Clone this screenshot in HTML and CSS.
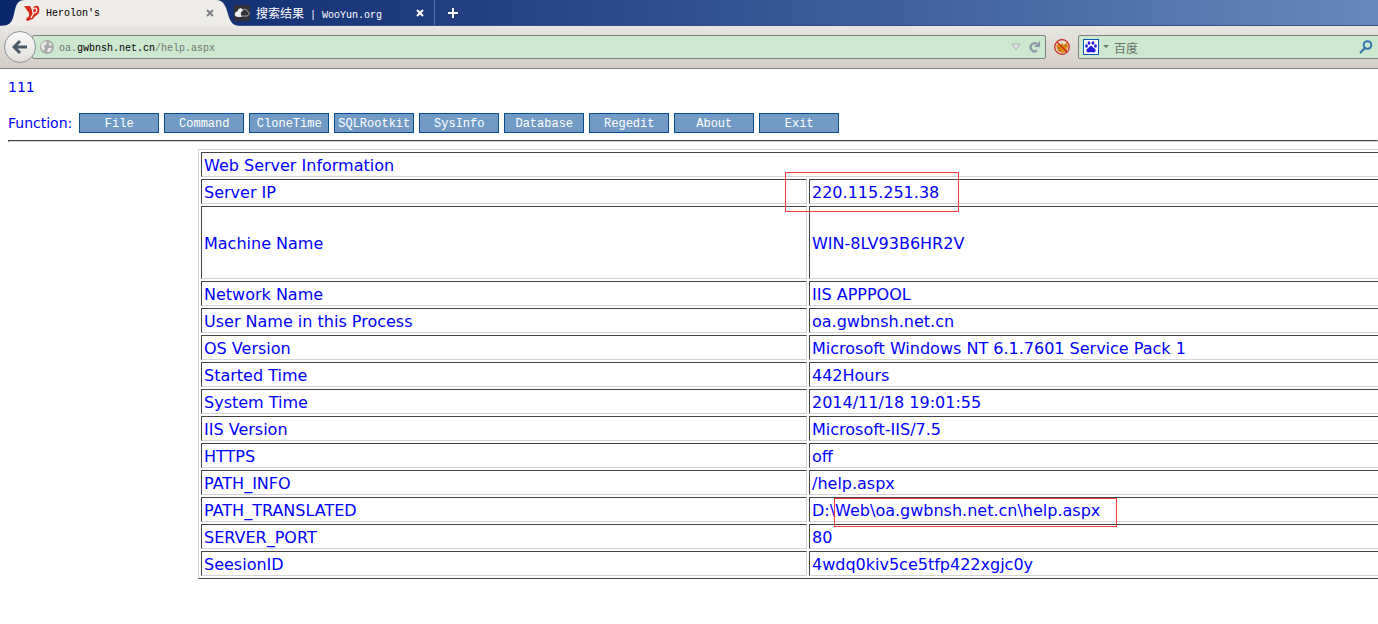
FILE: index.html
```html
<!DOCTYPE html>
<html lang="zh-CN">

<head>
    <meta charset="UTF-8">
    <meta name="viewport" content="width=device-width, initial-scale=1.0">
    <title>Herolon's</title>
    <link rel="stylesheet" href="styles.css">
</head>

<body>
    <header class="browser">
        <div class="tab_strip">
            <div class="tab active">
                <svg class="tab_shape" viewBox="0 0 240 26" preserveAspectRatio="none" aria-hidden="true">
                    <path d="M0 26C9 26 12 23 14 14C16 5 17 0 25 0H216C224 0 226 7 228 14C230 22 233 26 240 26Z" fill="#eeece8"/>
                </svg>
                <svg class="favicon" viewBox="0 0 16 16" aria-hidden="true">
                    <path d="M0 1L6 1L8 5C9 1 12 0 14 1C16 3 16 8 13 10C11 11 10 12 9 14L3 16L2 14L5 11L5 8Z" fill="#d62a17"/>
                    <path d="M11 3C8 3 8 8 10 8C13 8 14 3 11 3ZM9.500 8L7 13" fill="none" stroke="#fff" stroke-width="1.200"/>
                </svg>
                <span class="tab_title">Herolon's</span>
                <button class="tab_close" aria-label="Close tab"><svg viewBox="0 0 8 8"><path d="M1 1L7 7M7 1L1 7"/></svg></button>
            </div>
            <div class="tab">
                <svg class="favicon" viewBox="0 0 16 16" aria-hidden="true">
                    <rect width="16" height="16" fill="#303236"/>
                    <path d="M7 12C3 12 0 12 1 8C2 6 4 7 4 5C6 2 9 3 9 6C7 6 6 9 8 12Z" fill="#eee"/>
                    <path d="M9 5C12 3 13 5 13 6C16 7 16 11 12 11H7" fill="none" stroke="#aaa"/>
                </svg>
                <span class="tab_title"><span lang="zh">搜索结果</span> | WooYun.org</span>
                <button class="tab_close" aria-label="Close tab"><svg viewBox="0 0 8 8"><path d="M1 1L7 7M7 1L1 7"/></svg></button>
            </div>
            <button class="tab_new" aria-label="New tab"><svg viewBox="0 0 12 12"><path d="M6 1V11M1 6H11"/></svg></button>
        </div>
        <div class="toolbar">
            <button class="back" aria-label="Back">
                <svg viewBox="0 0 16 16"><path d="M8 2L2 8L8 14M2 8H15"/></svg>
            </button>
            <div class="url_bar">
                <svg class="globe" viewBox="0 0 14 14" aria-hidden="true">
                    <circle cx="7" cy="7" r="7" fill="#a9a9a9"/>
                    <path d="M2 3L6 1L7 4L4 6L5 9L3 11L1 7ZM9 2L12 4L11 6L9 5ZM8 8L12 8L10 12L7 12Z" fill="#e8e8e8"/>
                </svg>
                <a class="url" href="#">oa.<b>gwbnsh.net.cn</b>/help.aspx</a>
                <svg class="history" viewBox="0 0 10 8" aria-hidden="true"><path d="M1 1H9L5 7Z"/></svg>
                <button class="reload" aria-label="Reload">
                    <svg viewBox="0 0 12 12"><path d="M9 3A4 4 0 1 0 9 9.500" fill="none" stroke="#8e9aa6" stroke-width="2.200"/><path d="M12 0V6H6Z" fill="#8e9aa6"/></svg>
                </button>
            </div>
            <button class="blocker" aria-label="Firebug off">
                <svg viewBox="0 0 16 16">
                    <path d="M2 6L5 5L6 6L8 4L10 6L13 3L14 8L12 13L8 14L4 12Z" fill="#e38a12"/>
                    <path d="M3 9H6M5 12L7 11M10 7L12 6" stroke="#9a5a10"/>
                    <circle cx="8" cy="8" r="7.300" fill="none" stroke="#c9221c" stroke-width="1.200"/>
                    <path d="M3 3L13 13" stroke="#c9221c" stroke-width="1.200"/>
                </svg>
            </button>
            <div class="search_bar">
                <svg class="engine" viewBox="0 0 16 16" aria-hidden="true">
                    <rect x=".5" y=".5" width="15" height="15" fill="#fff" stroke="#0b57b5"/>
                    <g fill="#2319dc"><ellipse cx="3.500" cy="7" rx="1.400" ry="1.700"/><ellipse cx="6" cy="4" rx="1.400" ry="1.800"/><ellipse cx="10" cy="4" rx="1.400" ry="1.800"/><ellipse cx="12.500" cy="7" rx="1.400" ry="1.700"/><path d="M8 7C10 7 10 9 12 10C14 13 11 14 8 13C5 14 2 13 4 10C6 9 6 7 8 7Z"/></g>
                </svg>
                <svg class="engine_arrow" viewBox="0 0 6 4" aria-hidden="true"><path d="M0 0H6L3 3Z"/></svg>
                <input type="text" aria-label="Search" placeholder="百度">
                <button class="search_go" aria-label="Search">
                    <svg viewBox="0 0 14 14"><circle cx="8.500" cy="5" r="3.800"/><path d="M6 8L1 13"/></svg>
                </button>
            </div>
        </div>
    </header>

    <main class="page">
        <p class="message">111</p>
        <nav class="functions">
            <span class="functions_label">Function:</span>
            <button>File</button>
            <button>Command</button>
            <button>CloneTime</button>
            <button>SQLRootkit</button>
            <button>SysInfo</button>
            <button>Database</button>
            <button>Regedit</button>
            <button>About</button>
            <button>Exit</button>
        </nav>
        <hr>
        <div class="info_wrap">
            <table class="info">
                <tr><th colspan="2">Web Server Information</th></tr>
                <tr><td>Server IP</td><td class="marked">220.115.251.38<span class="mark mark_ip"></span></td></tr>
                <tr class="tall"><td>Machine Name</td><td>WIN-8LV93B6HR2V</td></tr>
                <tr><td>Network Name</td><td>IIS APPPOOL</td></tr>
                <tr><td>User Name in this Process</td><td>oa.gwbnsh.net.cn</td></tr>
                <tr><td>OS Version</td><td>Microsoft Windows NT 6.1.7601 Service Pack 1</td></tr>
                <tr><td>Started Time</td><td>442Hours</td></tr>
                <tr><td>System Time</td><td>2014/11/18 19:01:55</td></tr>
                <tr><td>IIS Version</td><td>Microsoft-IIS/7.5</td></tr>
                <tr><td>HTTPS</td><td>off</td></tr>
                <tr><td>PATH_INFO</td><td>/help.aspx</td></tr>
                <tr><td>PATH_TRANSLATED</td><td class="marked">D:\Web\oa.gwbnsh.net.cn\help.aspx<span class="mark mark_path"></span></td></tr>
                <tr><td>SERVER_PORT</td><td>80</td></tr>
                <tr><td>SeesionID</td><td>4wdq0kiv5ce5tfp422xgjc0y</td></tr>
            </table>
        </div>
    </main>
</body>

</html>
```
FILE: styles.css
```css
* {
    margin: 0;
    padding: 0;
    box-sizing: border-box;
}

body {
    background: #fff;
    color: #00f;
    font-family: Verdana, "DejaVu Sans", sans-serif;
    overflow-x: hidden;
}

button {
    border: none;
    background: none;
}

svg {
    display: block;
}

/* browser window */
.browser {
    font-family: "Liberation Mono", "Noto Sans CJK SC", monospace;
}

.tab_strip {
    display: flex;
    height: 26px;
    background: linear-gradient(to right, #0c266b, #1f3d80 32%, #4767a3 72%, #6888bb);
    border-bottom: 1px solid #34508c;
}

.tab {
    display: flex;
    align-items: center;
    width: 207px;
    height: 25px;
    padding: 0 10px 0 6px;
    border-right: 1px solid #5a71a5;
    color: #fff;
    font-size: 10px;
}

.tab.active {
    position: relative;
    width: 228px;
    height: 26px;
    padding: 0 14px 0 24px;
    border: none;
    color: #000;
}

.tab_shape {
    position: absolute;
    left: 0;
    top: 0;
    width: 240px;
    height: 26px;
}

.favicon,
.tab_title,
.tab_close {
    position: relative;
}

.favicon {
    width: 16px;
    height: 16px;
    margin-right: 6px;
}

.tab_title {
    flex: 1;
    white-space: nowrap;
}

.tab_title [lang="zh"] {
    font-size: 12px;
}

.tab_close svg {
    width: 8px;
    height: 8px;
    fill: none;
    stroke: #fff;
    stroke-width: 2;
}

.tab.active .tab_close svg {
    stroke: #7b8087;
}

.tab_new {
    padding: 0 12px;
}

.tab_new svg {
    width: 12px;
    height: 12px;
    stroke: #fff;
    stroke-width: 2;
}

.toolbar {
    display: flex;
    align-items: center;
    height: 43px;
    padding-left: 4px;
    background: linear-gradient(#e8e6e2, #d4cfc7);
    border-bottom: 1px solid #808080;
}

.back {
    position: relative;
    display: flex;
    align-items: center;
    justify-content: center;
    width: 32px;
    height: 32px;
    border: 1px solid #8c949c;
    border-radius: 50%;
    background: linear-gradient(#fbfbfa, #e3e0db);
}

.back svg {
    width: 16px;
    height: 16px;
    fill: none;
    stroke: #4b5866;
    stroke-width: 3;
}

.url_bar,
.search_bar {
    display: flex;
    align-items: center;
    height: 24px;
    border: 1px solid #7d827e;
    border-radius: 2px;
    background: #cce8cf;
}

.url_bar {
    flex: 1;
    margin-left: -4px;
    padding: 0 5px 0 7px;
}

.globe {
    width: 14px;
    height: 14px;
}

.url {
    flex: 1;
    margin-left: 5px;
    padding-top: 2px;
    color: #6c7a6e;
    font-size: 10px;
    text-decoration: none;
}

.url b {
    color: #000;
    font-weight: normal;
}

.history {
    width: 10px;
    height: 8px;
    margin-right: 7px;
    fill: #dde3e6;
    stroke: #a9b6b4;
}

.reload svg {
    width: 12px;
    height: 12px;
}

.blocker {
    padding: 0 8px;
}

.blocker svg {
    width: 16px;
    height: 16px;
}

.search_bar {
    width: 302px;
    margin-right: -2px;
    padding: 0 6px 0 4px;
}

.engine {
    width: 16px;
    height: 16px;
}

.engine_arrow {
    width: 6px;
    height: 4px;
    margin: 0 5px 0 4px;
    fill: #6f7a72;
}

.search_bar input {
    flex: 1;
    min-width: 0;
    border: none;
    background: none;
    font-family: "Noto Sans CJK SC", sans-serif;
    font-size: 12px;
}

.search_bar input::placeholder {
    color: #66736a;
}

.search_go svg {
    width: 14px;
    height: 14px;
    fill: none;
    stroke: #3673b0;
    stroke-width: 2;
}

/* page */
.page {
    padding: 8px 0 8px 8px;
}

.message,
.functions {
    font-size: 14px;
    line-height: 20px;
}

.functions {
    display: flex;
    gap: 5px;
    margin-top: 16px;
}

.functions_label {
    margin-right: 2px;
}

.functions button {
    width: 80px;
    height: 20px;
    padding-top: 2px;
    border: 1px solid #084b8e;
    background: #719bc5;
    color: #fff;
    font-family: "Liberation Mono", monospace;
    font-size: 12px;
}

hr {
    margin: 7px 0;
    border: 1px solid;
    border-color: #444 #d4d4d4 #d4d4d4 #444;
}

.info_wrap {
    padding-left: 190px;
}

/* the table runs past the right edge of the window */
.info {
    width: calc(100% + 40px);
    table-layout: fixed;
    border: 1px solid;
    border-color: #d4d4d4 #444 #444 #d4d4d4;
    border-spacing: 2px;
    font-size: 16px;
    line-height: 21px;
}

.info th,
.info td {
    padding: 2px 1px 0 2px;
    border: 1px solid;
    border-color: #444 #d4d4d4 #d4d4d4 #444;
    font-weight: normal;
    text-align: left;
}

.info .tall td {
    height: 73px;
}

.marked {
    position: relative;
}

.mark {
    position: absolute;
    border: 1px solid #f33b3b;
}

.mark_ip {
    left: -25px;
    top: -8px;
    width: 174px;
    height: 40px;
}

.mark_path {
    left: 24px;
    top: 0;
    width: 283px;
    height: 29px;
}
```
